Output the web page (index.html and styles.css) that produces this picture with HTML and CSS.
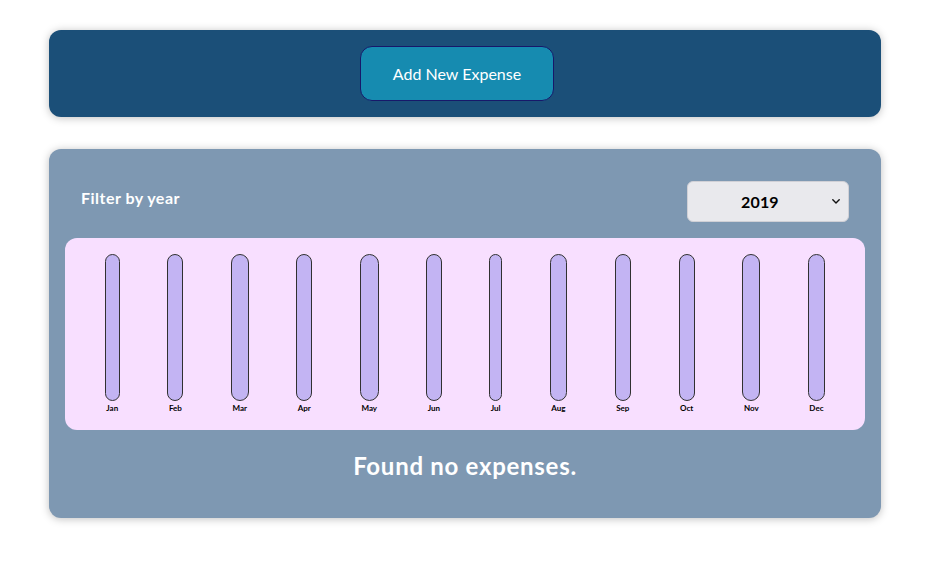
FILE: index.html
```html
<!DOCTYPE html>
<html lang="en">
<head>
<meta charset="utf-8">
<title>Expenses</title>
<link rel="stylesheet" href="styles.css">
</head>
<body>
<div class="new-expense">
  <button class="new-expense__btn" type="button">Add New Expense</button>
</div>
<div class="expenses">
  <div class="expenses-filter">
    <div class="expenses-filter__control">
      <label class="expenses-filter__label">Filter by year</label>
      <span class="expenses-filter__wrap">
        <select class="expenses-filter__select">
          <option>2022</option>
          <option>2021</option>
          <option>2020</option>
          <option selected>2019</option>
        </select>
        <svg class="expenses-filter__arrow" width="8" height="5" viewBox="0 0 8 5" aria-hidden="true"><path d="M0.8 0.8 L4 4 L7.2 0.8" fill="none" stroke="#111111" stroke-width="1.4" stroke-linecap="round" stroke-linejoin="round"/></svg>
      </span>
    </div>
  </div>
  <div class="chart">
    <div class="chart-bar"><div class="chart-bar__inner"></div><div class="chart-bar__label">Jan</div></div>
    <div class="chart-bar"><div class="chart-bar__inner"></div><div class="chart-bar__label">Feb</div></div>
    <div class="chart-bar"><div class="chart-bar__inner"></div><div class="chart-bar__label">Mar</div></div>
    <div class="chart-bar"><div class="chart-bar__inner"></div><div class="chart-bar__label">Apr</div></div>
    <div class="chart-bar"><div class="chart-bar__inner"></div><div class="chart-bar__label">May</div></div>
    <div class="chart-bar"><div class="chart-bar__inner"></div><div class="chart-bar__label">Jun</div></div>
    <div class="chart-bar"><div class="chart-bar__inner"></div><div class="chart-bar__label">Jul</div></div>
    <div class="chart-bar"><div class="chart-bar__inner"></div><div class="chart-bar__label">Aug</div></div>
    <div class="chart-bar"><div class="chart-bar__inner"></div><div class="chart-bar__label">Sep</div></div>
    <div class="chart-bar"><div class="chart-bar__inner"></div><div class="chart-bar__label">Oct</div></div>
    <div class="chart-bar"><div class="chart-bar__inner"></div><div class="chart-bar__label">Nov</div></div>
    <div class="chart-bar"><div class="chart-bar__inner"></div><div class="chart-bar__label">Dec</div></div>
  </div>
  <h2 class="expenses-list__fallback">Found no expenses.</h2>
</div>
</body>
</html>
```
FILE: styles.css
```css
* {
  box-sizing: border-box;
}

html {
  font-family: Lato, "Open Sans", sans-serif;
}

body {
  margin: 0;
  padding-left: 4px;
  background: #ffffff;
}

.new-expense {
  background-color: #1b4f78;
  padding: 16px;
  margin: 30px auto 32px;
  width: 832px;
  border-radius: 12px;
  text-align: center;
  box-shadow: 0 1px 8px rgba(0, 0, 0, 0.25);
}

.new-expense__btn {
  font: inherit;
  font-size: 16px;
  cursor: pointer;
  height: 55px;
  width: 194px;
  padding: 0;
  border: 1px solid #17186a;
  background-color: #168bb0;
  color: #ffffff;
  border-radius: 12px;
  margin-right: 16px;
}

.expenses {
  padding: 16px;
  background-color: #7e98b2;
  margin: 32px auto;
  width: 832px;
  border-radius: 12px;
  box-shadow: 0 1px 8px rgba(0, 0, 0, 0.25);
}

.expenses-filter {
  color: #ffffff;
  padding: 0 16px;
}

.expenses-filter__control {
  display: flex;
  width: 100%;
  align-items: center;
  justify-content: space-between;
  margin: 16px 0;
}

.expenses-filter__label {
  font-weight: bold;
  font-size: 16px;
  letter-spacing: 0.03em;
  margin-bottom: 8px;
}

.expenses-filter__wrap {
  position: relative;
  display: block;
}

.expenses-filter__select {
  display: block;
  appearance: none;
  -webkit-appearance: none;
  font: inherit;
  font-size: 16px;
  font-weight: bold;
  letter-spacing: 0.01em;
  width: 162px;
  height: 41px;
  padding: 0 0 0 53px;
  border-radius: 6px;
  border: 1px solid #d0d0d6;
  background-color: #e9e9ed;
  color: #000000;
}

.expenses-filter__arrow {
  position: absolute;
  right: 9px;
  top: 18px;
  pointer-events: none;
}

.chart {
  padding: 16px;
  border-radius: 12px;
  background-color: #f8dfff;
  text-align: center;
  display: flex;
  justify-content: space-around;
  height: 192px;
}

.chart-bar {
  height: 100%;
  display: flex;
  flex-direction: column;
  align-items: center;
}

.chart-bar__inner {
  flex: 1;
  width: 100%;
  border: 1px solid #313131;
  border-radius: 12px;
  background-color: #c3b4f3;
}

.chart-bar__label {
  font-weight: bold;
  font-size: 8px;
  line-height: 12px;
  padding: 1px 1.5px 0;
  text-align: center;
  color: #000000;
}

.expenses-list__fallback {
  color: #ffffff;
  text-align: center;
  font-size: 24px;
  font-weight: bold;
  letter-spacing: 0.03em;
  margin: 20px 0;
  line-height: 32px;
}
```
